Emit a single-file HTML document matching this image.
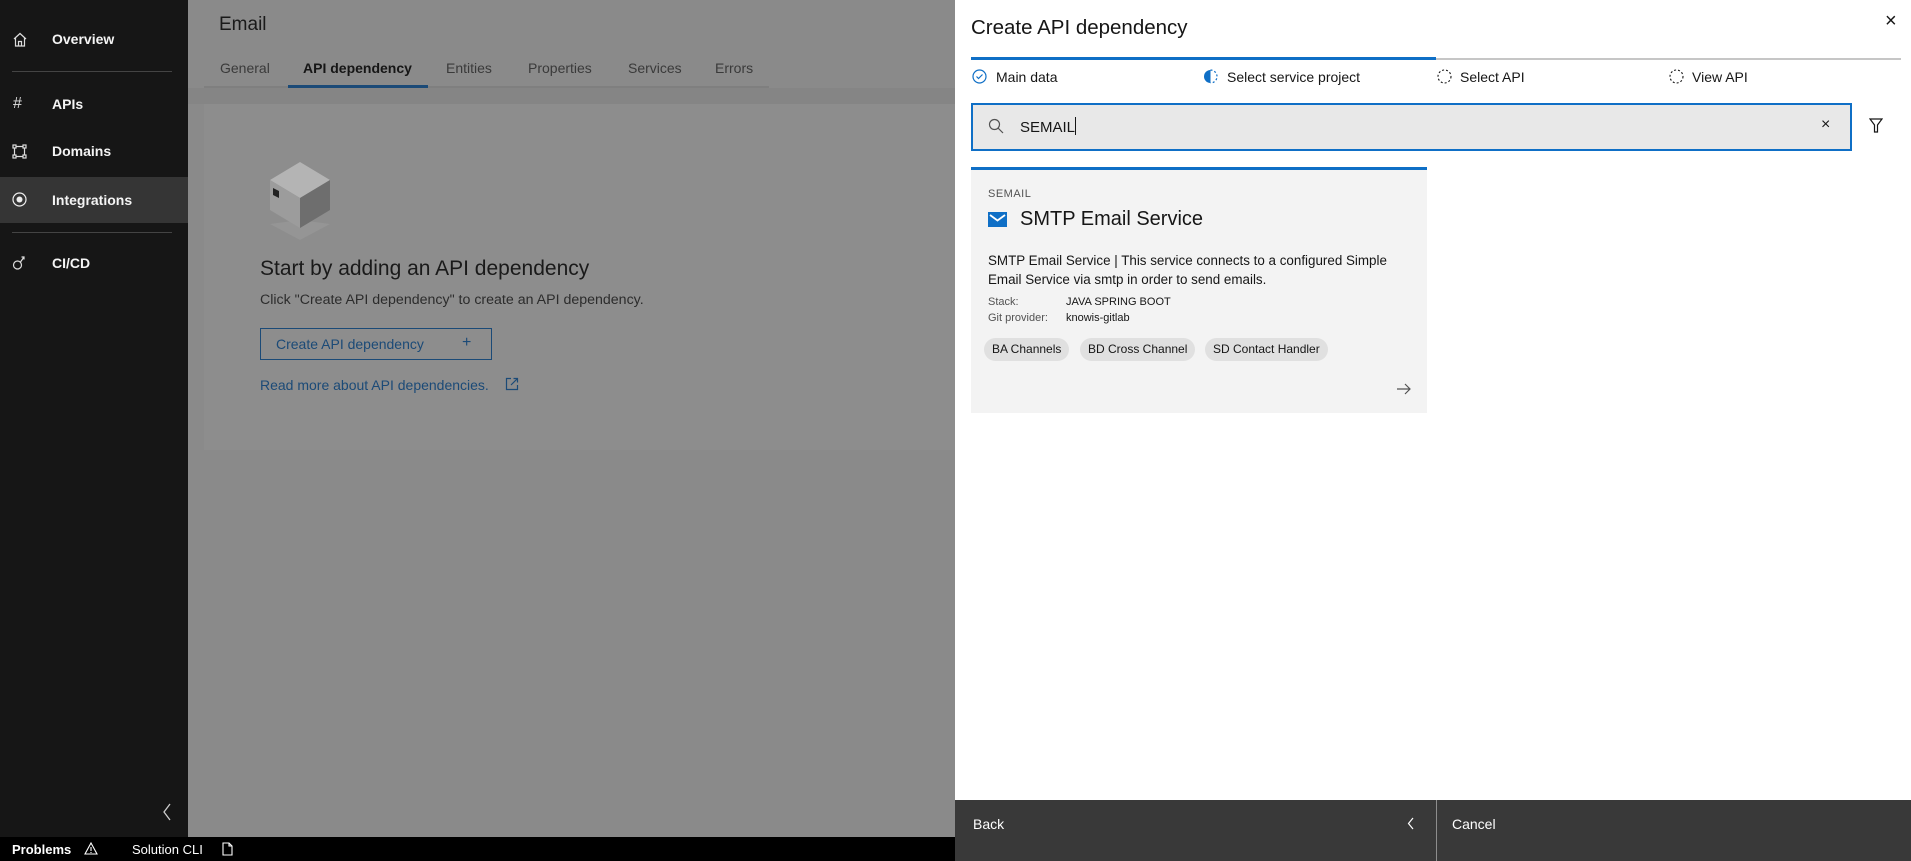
<!DOCTYPE html>
<html><head><meta charset="utf-8"><style>
*{box-sizing:border-box;margin:0;padding:0}
body{width:1911px;height:861px;overflow:hidden;position:relative;font-family:"Liberation Sans",sans-serif;background:#8a8a8a}
.a{position:absolute;white-space:nowrap}
#side{left:0;top:0;width:188px;height:837px;background:#161616}
.si{color:#f4f4f4;font-weight:bold;font-size:14px;left:52px}
.hr{position:absolute;left:12px;width:160px;height:1px;background:#444}
.tab{font-size:14px;color:#3a3a3a;top:60px}
#panel{left:955px;top:0;width:956px;height:800px;background:#fff}
.st{font-size:14px;color:#161616;top:69px}
.tag{position:absolute;top:338px;height:23px;line-height:23px;border-radius:12px;background:#e0e0e0;font-size:12px;color:#161616;padding:0 8px}
</style></head><body>
<div class="a" id="side"></div>
<svg class="a" style="left:13px;top:32px" width="14" height="15" viewBox="0 0 14 15" fill="none" stroke="#ddd" stroke-width="1.2"><path d="M1 7L7 1.5 13 7M2.5 6v8h9V6M5.5 14V9.5h3V14"/></svg>
<div class="a si" style="top:31px">Overview</div>
<div class="hr" style="top:71px"></div>
<div class="a" style="left:13px;top:95px;color:#ddd;font-size:16px">#</div>
<div class="a si" style="top:96px">APIs</div>
<svg class="a" style="left:12px;top:144px" width="15" height="15" viewBox="0 0 15 15" fill="none" stroke="#ddd" stroke-width="1.2"><rect x="1" y="1" width="3" height="3"/><rect x="11" y="1" width="3" height="3"/><rect x="1" y="11" width="3" height="3"/><rect x="11" y="11" width="3" height="3"/><path d="M4 2.5h7M4 12.5h7M2.5 4v7M12.5 4v7"/></svg>
<div class="a si" style="top:143px">Domains</div>
<div class="a" style="left:0;top:177px;width:188px;height:46px;background:#353535"></div>
<svg class="a" style="left:12px;top:192px" width="15" height="15" viewBox="0 0 15 15"><circle cx="7.5" cy="7.5" r="6.5" fill="none" stroke="#eee" stroke-width="1.2"/><circle cx="7.5" cy="7.5" r="3" fill="#eee"/></svg>
<div class="a si" style="top:192px">Integrations</div>
<div class="hr" style="top:232px"></div>
<svg class="a" style="left:12px;top:255px" width="15" height="16" viewBox="0 0 15 16" fill="none" stroke="#ddd" stroke-width="1.2"><circle cx="5.5" cy="10" r="4"/><path d="M8.5 7L12 2M9.5 2H12V4.5"/></svg>
<div class="a si" style="top:255px">CI/CD</div>
<svg class="a" style="left:162px;top:803px" width="10" height="18" viewBox="0 0 10 18" fill="none" stroke="#ccc" stroke-width="1.3"><path d="M8 1L2 9l6 8"/></svg>

<div class="a" style="left:219px;top:14px;font-size:19px;color:#1a1a1a">Email</div>
<div class="a tab" style="left:220px">General</div>
<div class="a tab" style="left:303px;color:#161616;font-weight:bold">API dependency</div>
<div class="a tab" style="left:446px">Entities</div>
<div class="a tab" style="left:528px">Properties</div>
<div class="a tab" style="left:628px">Services</div>
<div class="a tab" style="left:715px">Errors</div>
<div class="a" style="left:204px;top:86px;width:565px;height:2px;background:#7f7f7f"></div>
<div class="a" style="left:288px;top:85px;width:140px;height:3px;background:#1b4a77"></div>
<div class="a" style="left:188px;top:88px;width:767px;height:16px;background:#858585"></div>
<div class="a" style="left:204px;top:104px;width:751px;height:346px;background:#8d8d8d"></div>
<svg class="a" style="left:268px;top:160px" width="64" height="80" viewBox="0 0 64 80"><path d="M32 60L62 64 32 80 2 64z" fill="#959595"/><path d="M2 20L32 2 62 20 32 38z" fill="#b4b4b4"/><path d="M2 20L32 38V68L2 50z" fill="#9c9c9c"/><path d="M62 20L32 38V68L62 50z" fill="#6e6e6e"/><path d="M5 28l6 3v7l-6-3z" fill="#222"/></svg>
<div class="a" style="left:260px;top:257px;font-size:21px;color:#1a1a1a">Start by adding an API dependency</div>
<div class="a" style="left:260px;top:292px;font-size:14.2px;color:#2c2c2c">Click "Create API dependency" to create an API dependency.</div>
<div class="a" style="left:260px;top:328px;width:232px;height:32px;border:1px solid #1b4a77"></div>
<div class="a" style="left:276px;top:336px;font-size:14px;color:#1b4a77">Create API dependency</div>
<div class="a" style="left:462px;top:334px;font-size:16px;color:#1b4a77">+</div>
<div class="a" style="left:260px;top:377px;font-size:14px;color:#1b4a77">Read more about API dependencies.</div>
<svg class="a" style="left:505px;top:377px" width="14" height="14" viewBox="0 0 14 14" fill="none" stroke="#1b4a77" stroke-width="1.2"><path d="M6 1.5H1.5v11h11V8M8.5 1.5h4v4M12.5 1.5L6 8"/></svg>

<div class="a" style="left:0;top:837px;width:955px;height:24px;background:#000"></div>
<div class="a" style="left:12px;top:842px;font-size:13px;color:#fff;font-weight:bold">Problems</div>
<svg class="a" style="left:84px;top:842px" width="14" height="13" viewBox="0 0 14 13" fill="none" stroke="#fff" stroke-width="1.1"><path d="M7 1L13 12H1z M7 5v4M7 10v1"/></svg>
<div class="a" style="left:132px;top:842px;font-size:13px;color:#fff">Solution CLI</div>
<svg class="a" style="left:222px;top:842px" width="11" height="14" viewBox="0 0 11 14" fill="none" stroke="#fff" stroke-width="1.1"><path d="M1 1h6l3 3v9H1zM7 1v3h3"/></svg>

<div class="a" id="panel"></div>
<div class="a" style="left:971px;top:16px;font-size:20.5px;color:#161616">Create API dependency</div>
<div class="a" style="left:1885px;top:10px;font-size:20px;color:#161616">×</div>
<div class="a" style="left:971px;top:57px;width:465px;height:3px;background:#0f6fc6"></div>
<div class="a" style="left:1436px;top:58px;width:465px;height:2px;background:#c6c6c6"></div>
<svg class="a" style="left:972px;top:69px" width="15" height="15" viewBox="0 0 15 15" fill="none" stroke="#0f6fc6" stroke-width="1.2"><circle cx="7.5" cy="7.5" r="6.5"/><path d="M4.5 7.5l2 2 4-4"/></svg>
<div class="a st" style="left:996px">Main data</div>
<svg class="a" style="left:1203px;top:69px" width="15" height="15" viewBox="0 0 15 15"><path d="M7.5 1A6.5 6.5 0 0 0 7.5 14z" fill="#0f6fc6"/><path d="M7.5 1A6.5 6.5 0 0 1 7.5 14" fill="none" stroke="#0f6fc6" stroke-width="1.2" stroke-dasharray="2 2"/></svg>
<div class="a st" style="left:1227px">Select service project</div>
<svg class="a" style="left:1437px;top:69px" width="15" height="15" viewBox="0 0 15 15"><circle cx="7.5" cy="7.5" r="6.5" fill="none" stroke="#161616" stroke-width="1.1" stroke-dasharray="2 2"/></svg>
<div class="a st" style="left:1460px">Select API</div>
<svg class="a" style="left:1669px;top:69px" width="15" height="15" viewBox="0 0 15 15"><circle cx="7.5" cy="7.5" r="6.5" fill="none" stroke="#161616" stroke-width="1.1" stroke-dasharray="2 2"/></svg>
<div class="a st" style="left:1692px">View API</div>

<div class="a" style="left:971px;top:103px;width:881px;height:48px;background:#e8e8e8;border:2px solid #0f6fc6"></div>
<svg class="a" style="left:988px;top:118px" width="16" height="16" viewBox="0 0 16 16" fill="none" stroke="#525252" stroke-width="1.2"><circle cx="6.5" cy="6.5" r="5"/><path d="M10 10l5 5"/></svg>
<div class="a" style="left:1020px;top:117px;font-size:15px;color:#161616">SEMAIL<span style="display:inline-block;width:1px;height:18px;background:#161616;vertical-align:-3px"></span></div>
<div class="a" style="left:1821px;top:116px;font-size:16px;color:#161616">×</div>
<svg class="a" style="left:1869px;top:118px" width="14" height="15" viewBox="0 0 14 15" fill="none" stroke="#161616" stroke-width="1.2"><path d="M1 1h12L8.5 7v7h-3V7z"/></svg>

<div class="a" style="left:971px;top:167px;width:456px;height:246px;background:#f3f3f3;border-top:3px solid #0f6fc6"></div>
<div class="a" style="left:988px;top:188px;font-size:11px;color:#525252;letter-spacing:.5px">SEMAIL</div>
<svg class="a" style="left:988px;top:212px" width="19" height="15" viewBox="0 0 19 15"><rect width="19" height="15" fill="#0f6fc6"/><path d="M2 3l7.5 5.5L17 3" fill="none" stroke="#fff" stroke-width="1.8"/></svg>
<div class="a" style="left:1020px;top:208px;font-size:20px;color:#161616">SMTP Email Service</div>
<div class="a" style="left:988px;top:251px;font-size:13.4px;line-height:19px;color:#161616">SMTP Email Service | This service connects to a configured Simple<br>Email Service via smtp in order to send emails.</div>
<div class="a" style="left:988px;top:294px;font-size:11px;line-height:16px;color:#525252">Stack:<br>Git provider:</div>
<div class="a" style="left:1066px;top:294px;font-size:11px;line-height:16px;color:#161616">JAVA SPRING BOOT<br>knowis-gitlab</div>
<div class="tag" style="left:984px">BA Channels</div>
<div class="tag" style="left:1080px">BD Cross Channel</div>
<div class="tag" style="left:1205px">SD Contact Handler</div>
<svg class="a" style="left:1396px;top:383px" width="15" height="12" viewBox="0 0 15 12" fill="none" stroke="#525252" stroke-width="1.2"><path d="M1 6h13M9 1l5 5-5 5"/></svg>

<div class="a" style="left:955px;top:800px;width:956px;height:61px;background:#393939"></div>
<div class="a" style="left:1436px;top:800px;width:1px;height:61px;background:#8d8d8d"></div>
<div class="a" style="left:973px;top:816px;font-size:14px;color:#fff">Back</div>
<svg class="a" style="left:1407px;top:817px" width="8" height="13" viewBox="0 0 8 13" fill="none" stroke="#fff" stroke-width="1.2"><path d="M6 1L1.5 6.5 6 12"/></svg>
<div class="a" style="left:1452px;top:816px;font-size:14px;color:#fff">Cancel</div>
</body></html>
